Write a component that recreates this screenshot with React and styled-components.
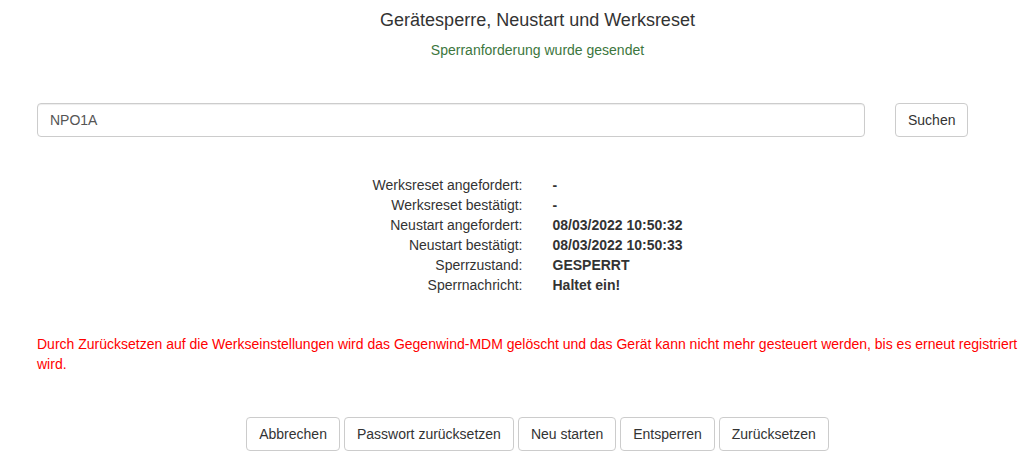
import React from "react";
import styled, { createGlobalStyle } from "styled-components";

const Global = createGlobalStyle`
  html, body { margin: 0; padding: 0; background: #fff; }
  body {
    font-family: "Liberation Sans", Arial, Helvetica, sans-serif;
    font-size: 14px;
    line-height: 20px;
    color: #333;
  }
  * { box-sizing: border-box; }
`;

const Page = styled.div`
  width: 1032px;
  display: flex;
  flex-direction: column;
`;

const Centered = styled.div`
  padding-left: 43px;
  text-align: center;
  margin-top: ${(p) => p.$top || 0}px;
`;

const Title = styled.h3`
  margin: 10px 0 0;
  font-size: 18px;
  font-weight: 400;
  line-height: 20px;
  color: #333;
  padding-left: 43px;
  text-align: center;
`;

const Success = styled.div`
  margin-top: 10px;
  color: #3c763d;
  padding-left: 43px;
  text-align: center;
`;

const SearchRow = styled.form`
  margin-top: 43px;
  padding-left: 37px;
  display: flex;
  align-items: center;
  gap: 30px;
`;

const Input = styled.input`
  width: 828px;
  height: 34px;
  padding: 6px 12px;
  border: 1px solid #ccc;
  border-radius: 4px;
  font: inherit;
  color: #555;
  box-shadow: inset 0 1px 1px rgba(0, 0, 0, 0.075);
  outline: none;
`;

const Button = styled.button`
  display: inline-block;
  height: 34px;
  padding: 6px 12px;
  border: 1px solid #ccc;
  border-radius: 4px;
  background: #fff;
  color: #333;
  font: inherit;
  line-height: 20px;
  cursor: pointer;
  white-space: nowrap;
`;

const InfoGrid = styled.dl`
  margin: 38px 0 0;
  padding-left: 43px;
  display: grid;
  grid-template-columns: 1fr 1fr;
  column-gap: 30px;
  row-gap: 0;
`;

const Label = styled.dt`
  text-align: right;
  color: #333;
  margin: 0;
`;

const Value = styled.dd`
  margin: 0;
  font-weight: 700;
  color: #333;
`;

const Warning = styled.p`
  margin: 39px 0 0;
  padding: 0 8px 0 37px;
  color: #ff0000;
`;

const ButtonBar = styled.div`
  margin-top: 43px;
  padding-left: 43px;
  display: flex;
  justify-content: center;
  gap: 4px;
`;

const rows = [
  ["Werksreset angefordert:", "-"],
  ["Werksreset bestätigt:", "-"],
  ["Neustart angefordert:", "08/03/2022 10:50:32"],
  ["Neustart bestätigt:", "08/03/2022 10:50:33"],
  ["Sperrzustand:", "GESPERRT"],
  ["Sperrnachricht:", "Haltet ein!"],
];

const actions = ["Abbrechen", "Passwort zurücksetzen", "Neu starten", "Entsperren", "Zurücksetzen"];

export default function App() {
  return (
    <Page>
      <Global />
      <Title>Gerätesperre, Neustart und Werksreset</Title>
      <Success>Sperranforderung wurde gesendet</Success>
      <SearchRow onSubmit={(e) => e.preventDefault()}>
        <Input defaultValue="NPO1A" />
        <Button type="submit">Suchen</Button>
      </SearchRow>
      <InfoGrid>
        {rows.map(([l, v]) => (
          <React.Fragment key={l}>
            <Label>{l}</Label>
            <Value>{v}</Value>
          </React.Fragment>
        ))}
      </InfoGrid>
      <Warning>
        Durch Zurücksetzen auf die Werkseinstellungen wird das Gegenwind-MDM gelöscht und das Gerät kann nicht mehr gesteuert werden, bis es erneut registriert wird.
      </Warning>
      <ButtonBar>
        {actions.map((a) => (
          <Button key={a} type="button">{a}</Button>
        ))}
      </ButtonBar>
    </Page>
  );
}
